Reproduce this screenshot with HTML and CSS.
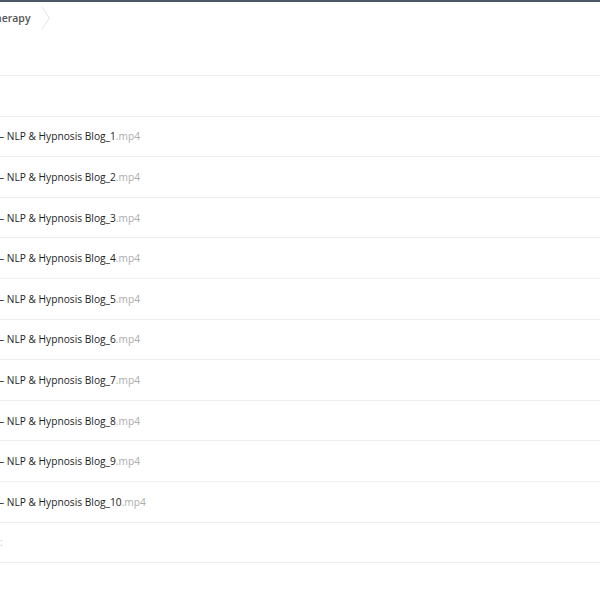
FILE: index.html
```html
<!DOCTYPE html>
<html>
<head>
<meta charset="utf-8">
<link rel="stylesheet" href="styles.css">
</head>
<body>
<div class="topbar"></div>
<div class="crumbs">
  <span class="crumb">herapy</span>
  <svg class="chev" width="10" height="24" viewBox="0 0 10 24"><path d="M1 1 L8.5 12 L1 23" fill="none" stroke="#e4e4e4" stroke-width="1"/></svg>
</div>
<div class="files">
  <div class="row"></div>
  <div class="row"><span class="name">– NLP &amp; Hypnosis Blog_1</span><span class="ext">.mp4</span></div>
  <div class="row"><span class="name">– NLP &amp; Hypnosis Blog_2</span><span class="ext">.mp4</span></div>
  <div class="row"><span class="name">– NLP &amp; Hypnosis Blog_3</span><span class="ext">.mp4</span></div>
  <div class="row"><span class="name">– NLP &amp; Hypnosis Blog_4</span><span class="ext">.mp4</span></div>
  <div class="row"><span class="name">– NLP &amp; Hypnosis Blog_5</span><span class="ext">.mp4</span></div>
  <div class="row"><span class="name">– NLP &amp; Hypnosis Blog_6</span><span class="ext">.mp4</span></div>
  <div class="row"><span class="name">– NLP &amp; Hypnosis Blog_7</span><span class="ext">.mp4</span></div>
  <div class="row"><span class="name">– NLP &amp; Hypnosis Blog_8</span><span class="ext">.mp4</span></div>
  <div class="row"><span class="name">– NLP &amp; Hypnosis Blog_9</span><span class="ext">.mp4</span></div>
  <div class="row"><span class="name">– NLP &amp; Hypnosis Blog_10</span><span class="ext">.mp4</span></div>
  <div class="row summary"><span class="sum">:</span></div>
</div>
</body>
</html>
```
FILE: styles.css
```css
html, body {
  margin: 0;
  padding: 0;
  background: #fff;
  font-family: "Open Sans", "Noto Sans", sans-serif;
  overflow: hidden;
}
.topbar {
  height: 2px;
  background: #4c5867;
}
.crumbs {
  height: 32px;
  display: flex;
  align-items: center;
  gap: 10px;
  margin-left: -5px;
}
.crumb {
  font-size: 10.5px;
  font-weight: 600;
  color: #555;
}
.chev {
  display: block;
}
.files {
  margin-top: 41px;
  border-top: 1px solid #eeeeee;
}
.row {
  height: 39.6px;
  border-bottom: 1px solid #eeeeee;
  display: flex;
  align-items: center;
  font-size: 10.2px;
  white-space: nowrap;
}
.name {
  color: #1e1e1e;
  margin-left: -1px;
}
.ext {
  color: #adadad;
}
.sum {
  color: #c8c8c8;
  font-size: 10px;
}
```
